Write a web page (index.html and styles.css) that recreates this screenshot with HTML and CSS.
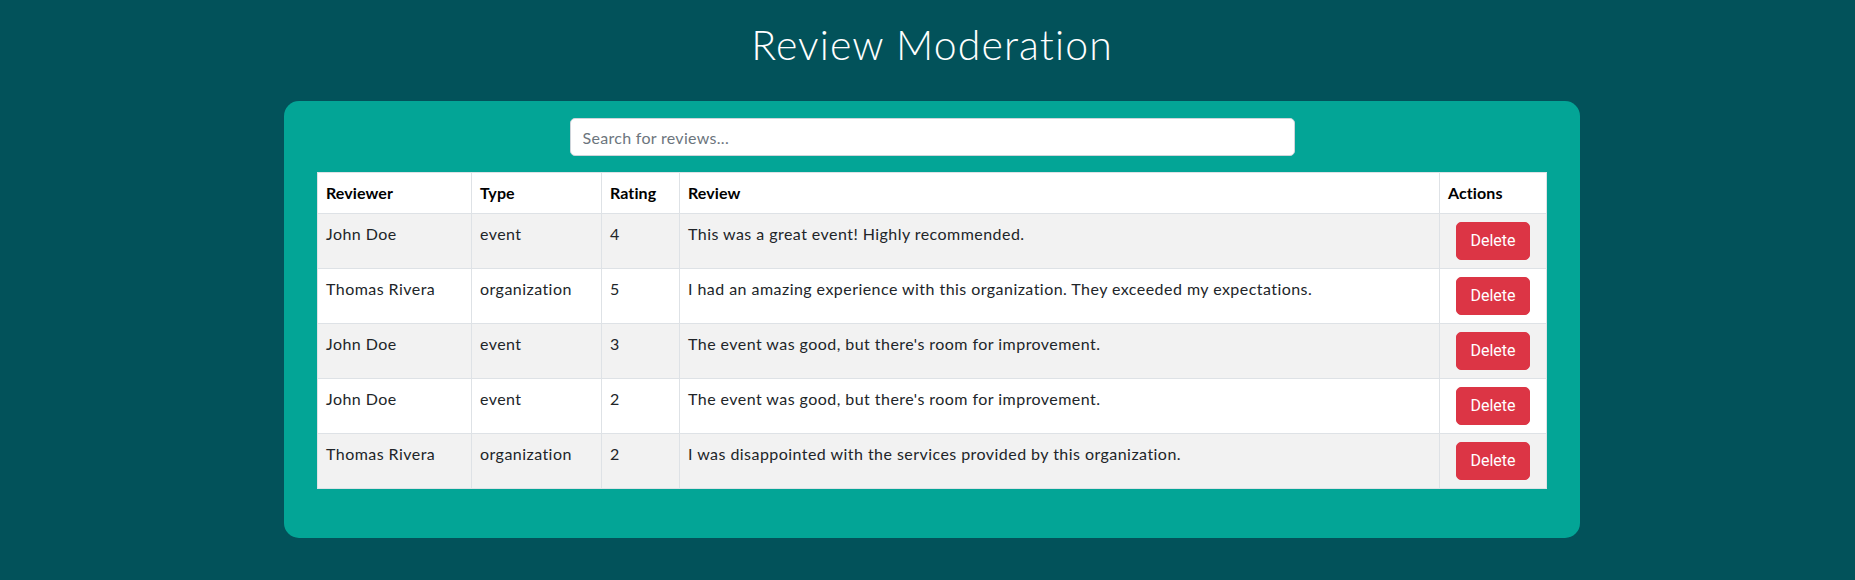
FILE: index.html
```html
<!DOCTYPE html>
<html lang="en">
<head>
<meta charset="utf-8">
<title>Review Moderation</title>
<link rel="stylesheet" href="styles.css">
</head>
<body>
<div class="page">
  <h1 class="title">Review Moderation</h1>
  <section class="card">
    <input class="search" type="text" placeholder="Search for reviews...">
    <table class="reviews">
      <colgroup>
        <col class="c-reviewer">
        <col class="c-type">
        <col class="c-rating">
        <col class="c-review">
        <col class="c-actions">
      </colgroup>
      <thead>
        <tr><th>Reviewer</th><th>Type</th><th>Rating</th><th>Review</th><th>Actions</th></tr>
      </thead>
      <tbody>
        <tr><td>John Doe</td><td>event</td><td>4</td><td>This was a great event! Highly recommended.</td><td class="act"><button class="btn-delete">Delete</button></td></tr>
        <tr><td>Thomas Rivera</td><td>organization</td><td>5</td><td>I had an amazing experience with this organization. They exceeded my expectations.</td><td class="act"><button class="btn-delete">Delete</button></td></tr>
        <tr><td>John Doe</td><td>event</td><td>3</td><td>The event was good, but there's room for improvement.</td><td class="act"><button class="btn-delete">Delete</button></td></tr>
        <tr><td>John Doe</td><td>event</td><td>2</td><td>The event was good, but there's room for improvement.</td><td class="act"><button class="btn-delete">Delete</button></td></tr>
        <tr><td>Thomas Rivera</td><td>organization</td><td>2</td><td>I was disappointed with the services provided by this organization.</td><td class="act"><button class="btn-delete">Delete</button></td></tr>
      </tbody>
    </table>
  </section>
</div>
</body>
</html>
```
FILE: styles.css
```css
* { box-sizing: border-box; }
html, body { margin: 0; padding: 0; }
body {
  background: #02525a;
  font-family: "Lato", "Liberation Sans", sans-serif;
  font-size: 16px;
  color: #212529;
}
.page {
  padding-left: 9px;
}
.title {
  margin: 21px 0 32px;
  text-align: center;
  color: #ffffff;
  font-size: 41px;
  line-height: 48px;
  font-weight: 300;
  letter-spacing: 1.1px;
}
.card {
  width: 1296px;
  margin: 0 auto;
  background: #03a596;
  border-radius: 15px;
  padding: 17px 33px 49px;
}
.search {
  display: block;
  width: 725px;
  height: 38px;
  margin: 0 auto 16px;
  padding: 6px 12px;
  border: 1px solid #ced4da;
  border-radius: 5px;
  background: #fff;
  font-family: inherit;
  font-size: 16px;
  letter-spacing: 0.3px;
  color: #495057;
}
.search::placeholder { color: #6c757d; }
.reviews {
  width: 100%;
  border-collapse: collapse;
  background: #fff;
  table-layout: fixed;
}
.c-reviewer { width: 154px; }
.c-type { width: 130px; }
.c-rating { width: 78px; }
.c-actions { width: 107px; }
.reviews th, .reviews td {
  border: 1px solid #dee2e6;
  padding: 8px;
  text-align: left;
  vertical-align: top;
  line-height: 24px;
}
.reviews td { letter-spacing: 0.45px; }
.reviews th {
  font-weight: 700;
  color: #000;
  letter-spacing: 0.1px;
}
.reviews tbody tr:nth-child(odd) { background: #f2f2f2; }
.reviews td.act { text-align: center; padding: 8px 0; letter-spacing: 0; }
.btn-delete {
  display: inline-block;
  width: 74px;
  height: 38px;
  padding: 6px 12px;
  border: 1px solid #dc3545;
  border-radius: 5px;
  background: #dc3545;
  color: #fff;
  font-family: "Roboto", "Liberation Sans", sans-serif;
  font-weight: 400;
  font-size: 16px;
  line-height: 24px;
}
```
